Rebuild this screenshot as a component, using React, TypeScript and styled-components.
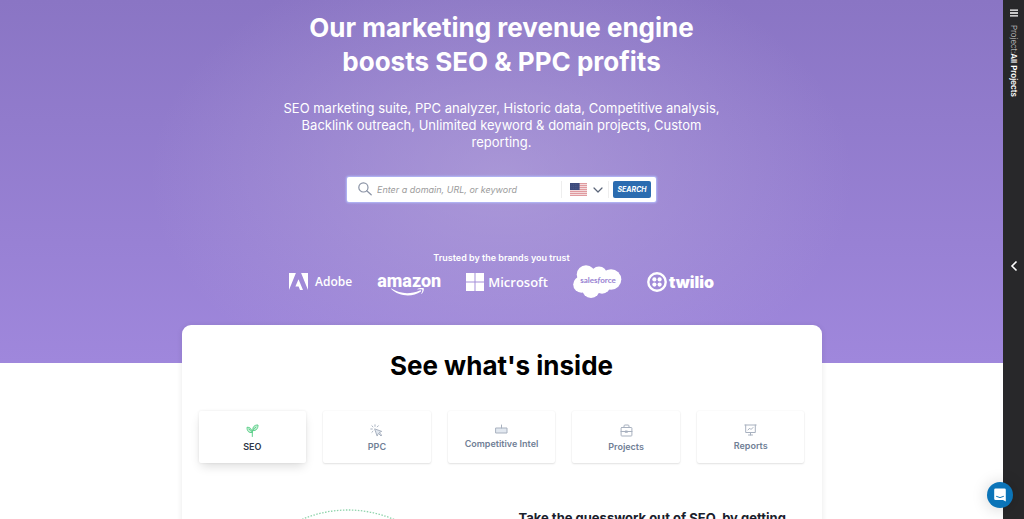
import React from "react";
import styled, { createGlobalStyle } from "styled-components";

const GlobalStyle = createGlobalStyle`
  * { box-sizing: border-box; }
  body {
    margin: 0;
    background: #ffffff;
    font-family: Inter, "Liberation Sans", sans-serif;
  }
  button, input, select { font-family: inherit; }
`;

const Page = styled.div`
  display: flex;
  height: 100vh;
  overflow: hidden;
`;

const Main = styled.main`
  flex: 1;
  min-width: 0;
  overflow: hidden;
`;

const Hero = styled.header`
  display: flex;
  flex-direction: column;
  align-items: center;
  padding: 11px 16px 65px;
  color: #ffffff;
  text-align: center;
  background:
    radial-gradient(ellipse 352px 230px at 50% 178px, rgba(190, 175, 222, 0.5), rgba(170, 150, 220, 0) 100%),
    linear-gradient(#8a75c4, #9f87dc);
`;

const HeroTitle = styled.h1`
  max-width: 440px;
  margin: 0 0 21px;
  font-size: 26px;
  line-height: 34px;
  font-weight: 700;
`;

const HeroText = styled.p`
  max-width: 448px;
  margin: 0 0 26px;
  font-size: 13px;
  line-height: 17px;
  font-weight: 400;
`;

const SearchForm = styled.form`
  display: flex;
  align-items: center;
  width: 309px;
  max-width: 100%;
  height: 25px;
  padding: 0 5px 0 11px;
  margin-bottom: 49px;
  border-radius: 2px;
  background: #ffffff;
  box-shadow: 0 0 2px 1px #b3bdfb;
`;

const SearchInput = styled.input`
  flex: 1;
  min-width: 0;
  height: 18px;
  margin-left: 5px;
  padding: 0;
  border: 0;
  outline: 0;
  background: none;
  color: #4a5568;
  font-size: 9px;
  font-style: italic;
  &::placeholder { color: #9b9b9b; opacity: 1; }
`;

const Country = styled.label`
  position: relative;
  display: flex;
  align-items: center;
  gap: 6px;
  height: 17px;
  padding: 0 5px 0 8px;
  margin-right: 4px;
  border: solid #eeeeee;
  border-width: 0 1px;
`;

const CountrySelect = styled.select`
  position: absolute;
  inset: 0;
  width: 100%;
  opacity: 0;
  cursor: pointer;
`;

const SearchButton = styled.button`
  width: 38px;
  height: 17px;
  padding: 0;
  border: 0;
  border-radius: 2px;
  background: #2b6cb0;
  color: #ffffff;
  font-size: 7px;
  font-style: italic;
  font-weight: 700;
`;

const Trusted = styled.p`
  margin: 0;
  font-size: 9px;
  line-height: 14px;
  font-weight: 600;
`;

const Brands = styled.div`
  display: flex;
  flex-wrap: wrap;
  justify-content: center;
  align-items: center;
  gap: 25px;
  min-height: 33px;
`;

const Brand = styled.div<{ $gap?: number }>`
  display: flex;
  align-items: center;
  gap: ${(p) => p.$gap ?? 4}px;
`;

const BrandName = styled.span<{ $size: number; $weight: number; $family?: string }>`
  font-family: ${(p) => p.$family ?? '"Open Sans"'}, sans-serif;
  font-size: ${(p) => p.$size}px;
  line-height: 18px;
  font-weight: ${(p) => p.$weight};
`;

const Card = styled.section`
  position: relative;
  width: 640px;
  max-width: calc(100% - 32px);
  min-height: 420px;
  margin: -38px auto 0;
  padding: 24px 17px;
  border-radius: 9px;
  background: #ffffff;
  box-shadow: 0 1px 6px rgba(0, 0, 0, 0.09);
`;

const CardTitle = styled.h2`
  margin: 0 0 28px;
  color: #000000;
  font-size: 26px;
  line-height: 34px;
  font-weight: 700;
  text-align: center;
`;

const Tabs = styled.div`
  display: grid;
  grid-template-columns: repeat(5, 1fr);
  gap: 17px;
`;

const Tab = styled.button<{ $active?: boolean }>`
  display: flex;
  flex-direction: column;
  align-items: center;
  gap: 3px;
  height: 52px;
  padding: 13px 4px 0;
  border: 0;
  border-radius: 2px;
  background: #ffffff;
  color: ${(p) => (p.$active ? "#2d3748" : "#718096")};
  font-size: 9px;
  line-height: 13px;
  font-weight: 600;
  box-shadow: ${(p) =>
    p.$active
      ? "0 5px 10px -2px rgba(0,0,0,0.14), 0 0 3px rgba(0,0,0,0.08)"
      : "0 1px 2px rgba(0,0,0,0.11), 0 0 2px rgba(0,0,0,0.06)"};
  svg { color: ${(p) => (p.$active ? "#5fd08c" : "#a8b1bf")}; }
`;

const Feature = styled.div`
  display: grid;
  grid-template-columns: 298fr 286fr;
  gap: 22px;
  padding-top: 46px;
`;

const Illustration = styled.div`
  display: flex;
  justify-content: center;
`;

const FeatureTitle = styled.h3`
  margin: 0;
  color: #1a202c;
  font-size: 13px;
  line-height: 18px;
  font-weight: 700;
`;

const Sidebar = styled.aside`
  display: flex;
  flex-direction: column;
  align-items: center;
  flex: none;
  width: 21px;
  padding-top: 9px;
  background: #28282a;
  color: #ffffff;
`;

const IconButton = styled.button`
  display: flex;
  padding: 0;
  border: 0;
  background: none;
  color: inherit;
`;

const ProjectLabel = styled.div`
  height: 243px;
  padding-top: 8px;
  writing-mode: vertical-rl;
  color: #d8d8d8;
  font-size: 8px;
  line-height: 12px;
  font-weight: 300;
  strong { color: #ffffff; font-weight: 600; }
`;

const Chat = styled.button`
  position: fixed;
  right: 11px;
  bottom: 11px;
  display: flex;
  align-items: center;
  justify-content: center;
  width: 26px;
  height: 26px;
  padding: 0;
  border: 0;
  border-radius: 50%;
  background: #0b74b8;
  box-shadow: 0 1px 16px rgba(0, 0, 0, 0.18);
`;

const SearchIcon = () => (
  <svg width="14" height="16" viewBox="0 0 14 16" fill="none" stroke="#8a93a5" strokeWidth="1.2" strokeLinecap="round">
    <circle cx="5.4" cy="5.4" r="4.6" />
    <path d="M8.7 8.7 13.2 12.8" />
  </svg>
);

const Flag = () => (
  <svg width="17" height="13" viewBox="0 0 17 13">
    <rect width="17" height="13" fill="#f3d9db" />
    {[0, 2, 4, 6, 8, 10, 12].map((y) => (
      <rect key={y} y={y} width="17" height="1" fill="#e09a9f" />
    ))}
    <rect width="9.6" height="7" fill="#3d4b7c" />
    <path d="M1.5 1.7h7M1.5 3.5h7M1.5 5.3h7" stroke="#66739c" strokeWidth=".5" strokeDasharray=".7 1" />
  </svg>
);

const Chevron = () => (
  <svg width="10" height="7" viewBox="0 0 10 7" fill="none" stroke="#5a6478" strokeWidth="1.2" strokeLinecap="round" strokeLinejoin="round">
    <path d="m1 2 4 4 4-4" />
  </svg>
);

const AdobeMark = () => (
  <svg width="19" height="17" viewBox="0 0 19 17" fill="#fff">
    <path d="M0 0h6.9L0 17zM12.1 0H19v17zM9.5 6.2 14 17h-3l-1.4-3.5H6.4z" />
  </svg>
);

const AmazonSmile = () => (
  <svg width="36" height="8" viewBox="0 0 36 8" fill="#fff">
    <path d="M.5.6C9 6.2 19.5 6.5 28.8 2.5c1.1-.5 1.8.6.8 1.3C22 9.2 8 9 .2 1.100-.1.7.1.4.5.6z" />
    <path d="M26.5.9C28.4-.3 32.2-.1 32.7.3c.5.6-.2 4.100-2 5.600-.3.2-.6.1-.4-.2.7-1.5 1.3-3.5 1-4.100-.4-.5-3-.3-4.500-.2-.4 0-.6-.2-.3-.5z" />
  </svg>
);

const MicrosoftMark = () => (
  <svg width="18" height="18" viewBox="0 0 18 18" fill="#fff">
    <path d="M0 0h8.5v8.5H0zM9.5 0H18v8.5H9.5zM0 9.5h8.5V18H0zM9.5 9.5H18V18H9.5z" />
  </svg>
);

const Salesforce = () => (
  <svg width="49" height="33" viewBox="0 0 49 33" fill="#fff" role="img" aria-label="salesforce">
    <circle cx="13" cy="9.5" r="9.3" />
    <circle cx="26" cy="9.5" r="8" />
    <circle cx="38" cy="14.5" r="10.3" />
    <circle cx="8.5" cy="19.5" r="8.3" />
    <circle cx="18" cy="24" r="9" />
    <circle cx="29" cy="20.5" r="8.3" />
    <text x="25" y="18" textAnchor="middle" fontFamily="Lato, sans-serif" fontSize="8" fontWeight="700" fill="#9882d2">
      sales<tspan fontStyle="italic">f</tspan>orce
    </text>
  </svg>
);

const TwilioMark = () => (
  <svg width="20" height="20" viewBox="0 0 20 20" fill="#fff">
    <circle cx="10" cy="10" r="8.7" fill="none" stroke="#fff" strokeWidth="2.4" />
    <circle cx="7.4" cy="7.4" r="2.1" />
    <circle cx="12.6" cy="7.4" r="2.1" />
    <circle cx="7.4" cy="12.6" r="2.1" />
    <circle cx="12.6" cy="12.6" r="2.1" />
  </svg>
);

const AmazonBrand = styled.div`
  display: flex;
  flex-direction: column;
  align-items: center;
  padding-top: 5px;
  svg { margin-top: -2px; }
`;

const iconProps = { width: 13, fill: "none", stroke: "currentColor", strokeLinecap: "round", strokeLinejoin: "round" } as const;

const SproutIcon = () => (
  <svg {...iconProps} height="13" viewBox="0 0 13 13">
    <path fill="#c6f0d5" d="M6 8.500C2.500 9 1 7 1 3.300c3.200-.2 5 1.700 5 5.200zM6.800 6.500C6.500 2.600 8.500.900 12 1c.1 3.500-1.600 6-5.200 5.500z" />
    <path d="M3 5.100c1.700.9 2.900 2 3.300 3.400v4M9.800 3.200C8 4.200 6.700 5.800 6.400 8" />
  </svg>
);

const ClickIcon = () => (
  <svg {...iconProps} height="13" viewBox="0 0 13 13">
    <path fill="#e2e8f0" d="m5 5 6.700 2.400-2.500 1.200 2.600 2.600-.8.800-2.600-2.600-1.100 2.300z" />
    <path strokeDasharray="1.5 1" d="M5 .8V3M1.900 1.800l1.500 1.500M.8 5H3M8.300 1.800 6.900 3.300M1.900 8.300l1.500-1.500" />
  </svg>
);

const IntelIcon = () => (
  <svg {...iconProps} height="10" viewBox="0 0 13 10">
    <path fill="#e2e8f0" d="M1 4h11v5H1z" />
    <path d="M6.500 1v3" />
  </svg>
);

const CaseIcon = () => (
  <svg {...iconProps} height="13" viewBox="0 0 13 13">
    <path d="M1.800 3.500h9.400q.7 0 .7.700v7q0 .8-.7.800H1.800q-.7 0-.7-.8v-7q0-.7.700-.7zM4 3.300V2q0-1 1-1h3q1 0 1 1v1.300M1 7.500h11M5.500 7h2v1.300h-2z" />
  </svg>
);

const ReportIcon = () => (
  <svg {...iconProps} height="12" viewBox="0 0 13 12">
    <path d="M.8 1h11.400M1.700 1v7.500h9.600V1M4 6l1.700-1.800 1.300 1.300 2-2M6.500 8.500V11M4.500 11h4" />
  </svg>
);

const tabs = [
  { label: "SEO", Icon: SproutIcon },
  { label: "PPC", Icon: ClickIcon },
  { label: "Competitive Intel", Icon: IntelIcon },
  { label: "Projects", Icon: CaseIcon },
  { label: "Reports", Icon: ReportIcon },
];

export default function App() {
  return (
    <Page>
      <GlobalStyle />
      <Main>
        <Hero>
          <HeroTitle>
            Our marketing revenue engine
            <br />
            boosts SEO &amp; PPC profits
          </HeroTitle>
          <HeroText>
            SEO marketing suite, PPC analyzer, Historic data, Competitive analysis, Backlink outreach, Unlimited keyword
            &amp; domain projects, Custom reporting.
          </HeroText>
          <SearchForm onSubmit={(e) => e.preventDefault()}>
            <SearchIcon />
            <SearchInput aria-label="Domain, URL, or keyword" placeholder="Enter a domain, URL, or keyword" />
            <Country>
              <Flag />
              <Chevron />
              <CountrySelect aria-label="Country">
                <option>US</option>
              </CountrySelect>
            </Country>
            <SearchButton type="submit">SEARCH</SearchButton>
          </SearchForm>
          <Trusted>Trusted by the brands you trust</Trusted>
          <Brands>
            <Brand $gap={7}>
              <AdobeMark />
              <BrandName $size={12} $weight={600}>Adobe</BrandName>
            </Brand>
            <AmazonBrand>
              <BrandName $size={18} $weight={800} $family="Roboto">amazon</BrandName>
              <AmazonSmile />
            </AmazonBrand>
            <Brand>
              <MicrosoftMark />
              <BrandName $size={13} $weight={600}>Microsoft</BrandName>
            </Brand>
            <Salesforce />
            <Brand $gap={2}>
              <TwilioMark />
              <BrandName $size={16} $weight={900} $family="Inter">twilio</BrandName>
            </Brand>
          </Brands>
        </Hero>
        <Card>
          <CardTitle>See what's inside</CardTitle>
          <Tabs>
            {tabs.map(({ label, Icon }, i) => (
              <Tab key={label} type="button" $active={i === 0}>
                <Icon />
                {label}
              </Tab>
            ))}
          </Tabs>
          <Feature>
            <Illustration>
              <svg width="236" height="236" viewBox="0 0 236 236" fill="none">
                <circle cx="118" cy="118" r="117" stroke="#8fd3ac" strokeWidth="1.3" strokeDasharray="1.5 1.5" />
              </svg>
            </Illustration>
            <FeatureTitle>Take the guesswork out of SEO, by getting</FeatureTitle>
          </Feature>
        </Card>
      </Main>
      <Sidebar>
        <IconButton type="button" aria-label="Menu">
          <svg width="8" height="8" viewBox="0 0 8 8" stroke="#fff" strokeWidth="1.3">
            <path d="M0 1.200h8M0 4h8M0 6.800h8" />
          </svg>
        </IconButton>
        <ProjectLabel>
          Project:<strong>All Projects</strong>
        </ProjectLabel>
        <IconButton type="button" aria-label="Expand panel">
          <svg width="8" height="12" viewBox="0 0 8 12" fill="none" stroke="#fff" strokeWidth="1.6">
            <path d="M6.500 1.500 2 6l4.500 4.500" />
          </svg>
        </IconButton>
      </Sidebar>
      <Chat type="button" aria-label="Open chat">
        <svg width="12" height="14" viewBox="0 0 12 14" fill="none">
          <path fill="#fff" d="M1.500.500h9q1.300 0 1.300 1.300V13.500L9 12H1.500Q.2 12 .2 10.700V1.800Q.2.500 1.500.500z" />
          <path d="M2.500 8.500q3.500 2.400 7 0" stroke="#0b74b8" strokeWidth="1" strokeLinecap="round" />
        </svg>
      </Chat>
    </Page>
  );
}
